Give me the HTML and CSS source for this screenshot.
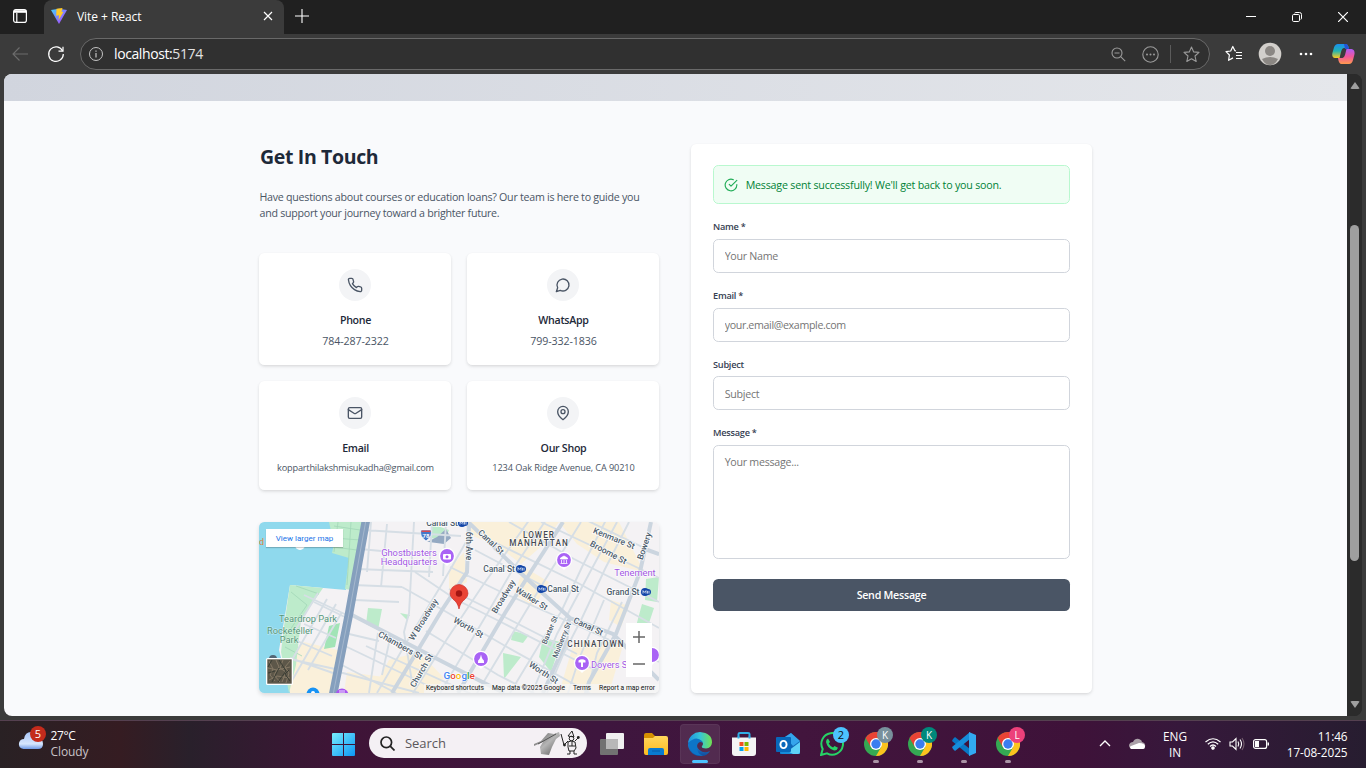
FILE: index.html
```html
<!DOCTYPE html>
<html lang="en">
<head>
<meta charset="utf-8">
<title>Vite + React</title>
<link rel="stylesheet" href="styles.css">
</head>
<body>
<svg class="defs" width="0" height="0">
  <defs>
    <linearGradient id="vite" x1="0" y1="0" x2="1" y2="1"><stop offset="0" stop-color="#41d1ff"/><stop offset="1" stop-color="#bd34fe"/></linearGradient>
    <linearGradient id="win" x1="0" y1="0" x2="1" y2="1"><stop offset="0" stop-color="#78eefe"/><stop offset="1" stop-color="#0c96f4"/></linearGradient>
    <linearGradient id="edgeA" x1="0" y1="0" x2="1" y2="0"><stop offset="0" stop-color="#1d91df"/><stop offset=".5" stop-color="#36c5d8"/><stop offset="1" stop-color="#71e250"/></linearGradient>
    <linearGradient id="edgeB" x1="0" y1="0" x2="0" y2="1"><stop offset="0" stop-color="#1a8fe0"/><stop offset="1" stop-color="#114b9c"/></linearGradient>
    <linearGradient id="copA" x1="0" y1="0" x2="0" y2="1"><stop offset="0" stop-color="#1a8ff0"/><stop offset=".5" stop-color="#22b3b0"/><stop offset="1" stop-color="#ffcb1f"/></linearGradient>
    <linearGradient id="copB" x1="0" y1="0" x2="0" y2="1"><stop offset="0" stop-color="#b05cf6"/><stop offset=".5" stop-color="#f0569b"/><stop offset="1" stop-color="#ff9a4d"/></linearGradient>
    <linearGradient id="cloud" x1="0" y1="0" x2="0" y2="1"><stop offset="0" stop-color="#a9c5f7"/><stop offset=".7" stop-color="#d6e6fc"/><stop offset="1" stop-color="#6f9ae6"/></linearGradient>
    <linearGradient id="hand" x1="0" y1="0" x2="1" y2="1"><stop offset="0" stop-color="#555"/><stop offset=".5" stop-color="#b5b5b5"/><stop offset="1" stop-color="#555"/></linearGradient>
    <linearGradient id="folder" x1="0" y1="0" x2="0" y2="1"><stop offset="0" stop-color="#ffd65c"/><stop offset="1" stop-color="#fdbb20"/></linearGradient>
    <symbol id="chrome" viewBox="0 0 24 24">
      <circle cx="12" cy="12" r="12" fill="#35a853"/>
      <path d="M12 12 1.6 6A12 12 0 0 1 22.4 6Z" fill="#e94335"/>
      <path d="M12 6H22.4A12 12 0 0 1 12 24L17.2 15Z" fill="#fcc31e"/>
      <path d="M1.6 6 6.8 15 12 12V6Z" fill="#e94335"/>
      <circle cx="12" cy="12" r="6" fill="#fff"/><circle cx="12" cy="12" r="4.7" fill="#3a7df0"/>
    </symbol>
    <symbol id="metro" viewBox="0 0 10 8"><circle cx="4" cy="4" r="4" fill="#1245a8"/><circle cx="7" cy="4" r="3" fill="#1245a8"/><path d="M2 5.6V2.6L3.5 4.4 5 2.6V5.6M6.5 2.8v2.8M8 2.8v2.8" stroke="#fff" stroke-width=".7" fill="none"/></symbol>
    <symbol id="place" viewBox="0 0 18 20"><path d="M9 19 5 15H13Z" fill="#fff"/><circle cx="9" cy="9" r="8.2" fill="#fff"/><circle cx="9" cy="9" r="6.9" fill="#a963f5"/></symbol>
  </defs>
</svg>

<div class="window">
  <header class="tabbar">
    <div class="workspaces"><svg width="16" height="16" viewBox="0 0 16 16" fill="none" stroke="#fff" stroke-width="1.2"><rect x="1.6" y="1.6" width="12.8" height="12.8" rx="2.2"/><path d="M2 3.500h12" stroke-width="2.600"/><path d="M4.800 5v9"/></svg></div>
    <div class="tab">
      <svg width="16" height="16" viewBox="0 0 16 16"><path d="M0 2 8 .8 16 2 8 16Z" fill="url(#vite)"/><path d="M5.500 .8 11.5 0 10.500 4 12.500 3.800 7.5 12.200 8 7.200 5.200 7.700Z" fill="#ffc928"/></svg>
      <span class="tab-title">Vite + React</span>
      <svg class="tab-close" width="10" height="10" viewBox="0 0 10 10"><path d="M1 1l8 8M9 1l-8 8" stroke="#fff" stroke-width="1.2"/></svg>
    </div>
    <svg class="newtab" width="14" height="14" viewBox="0 0 14 14"><path d="M7 0v14M0 7h14" stroke="#fff" stroke-width="1.1"/></svg>
    <div class="controls">
      <svg width="10" height="10" viewBox="0 0 10 10"><path d="M0 4.5h10" stroke="#fff"/></svg>
      <svg width="10" height="10" viewBox="0 0 10 10" fill="none" stroke="#fff"><rect x=".5" y="2.5" width="7" height="7" rx="1.2"/><path d="M2.5 1.2Q3 .5 4 .5H7.5Q9.5.5 9.5 2.5V6Q9.5 7 8.8 7.5"/></svg>
      <svg width="10" height="10" viewBox="0 0 10 10"><path d="M0 0l10 10M10 0L0 10" stroke="#fff" stroke-width="1.2"/></svg>
    </div>
  </header>
  <div class="toolbar">
    <svg class="back" width="16" height="16" viewBox="0 0 16 16" fill="none" stroke="#6d6d6d" stroke-width="1.1"><path d="M7.5 1.5 1 8l6.500 6.500M1 8h15"/></svg>
    <svg class="reload" width="18" height="18" viewBox="0 0 18 18" fill="none" stroke="#fff" stroke-width="1.2"><path d="M15.600 6A7.300 7.300 0 1 0 16.300 9"/><path d="M16 1.800V6.200H11.500"/></svg>
    <div class="address">
      <svg class="info" width="14" height="14" viewBox="0 0 14 14" fill="none" stroke="#c4c4c4"><circle cx="7" cy="7" r="6.500"/><path d="M7 6v4.500M7 3.500v1.300" stroke-width="1.200"/></svg>
      <span class="url"><b>localhost:</b>5174</span>
      <div class="address-icons">
        <svg width="15" height="15" viewBox="0 0 15 15" fill="none" stroke="#9a9a9a" stroke-width="1.100"><circle cx="6" cy="6" r="5"/><path d="M3.500 6h5M9.700 9.700l4.500 4.500"/></svg>
        <svg width="17" height="17" viewBox="0 0 17 17" fill="none" stroke="#9a9a9a" stroke-width="1.100"><circle cx="8.500" cy="8.500" r="7.700"/><g fill="#9a9a9a" stroke="none"><circle cx="5" cy="8.500" r="1"/><circle cx="8.500" cy="8.500" r="1"/><circle cx="12" cy="8.500" r="1"/></g></svg>
        <i class="divider"></i>
        <svg width="17" height="17" viewBox="0 0 17 17" fill="none" stroke="#9a9a9a" stroke-width="1.100" stroke-linejoin="round"><path d="M8.500 1 10.700 5.900 16 6.400 12 10 13.200 15.500 8.500 12.700 3.800 15.500 5 10 1 6.400 6.300 5.900Z"/></svg>
      </div>
    </div>
    <svg class="fav" width="18" height="18" viewBox="0 0 18 18" fill="none" stroke="#fff" stroke-width="1.200" stroke-linejoin="round"><path d="M11 6 9.900 5.700 7.800 1.500 5.700 6 1 6.600 4.400 10 3.600 15.300 8 12.900M11 7.500H17M11 10.500H17M11 13.500H17"/></svg>
    <svg class="avatar" width="24" height="24" viewBox="0 0 24 24"><circle cx="12" cy="12" r="11.300" fill="#d2cfcb"/><circle cx="12" cy="9" r="5" fill="#8b8783"/><path d="M4 17Q12 12.800 20 17 17 23 12 23T4 17Z" fill="#8b8783"/></svg>
    <svg class="more" width="14" height="4" viewBox="0 0 14 4" fill="#fff"><circle cx="2" cy="2" r="1.300"/><circle cx="7" cy="2" r="1.300"/><circle cx="12" cy="2" r="1.300"/></svg>
    <svg class="copilot" width="23" height="22" viewBox="0 0 23 22"><path d="M6 1H13.500Q16 1 16.800 5H12Q10 5 9 9L7.500 15H3Q-.500 14.500.400 10L2 4.500Q3 1 6 1Z" fill="url(#copA)"/><path d="M12 1h2Q16 1 17 6H13Z" fill="#2454d6"/><path d="M17 21H9.500Q6.800 21 6 15H10.500Q12 15 13 12L14.500 6H19.500Q23.500 7 22.300 12L21 17Q20 21 17 21Z" fill="url(#copB)"/></svg>
  </div>

  <div class="viewport">
    <main class="page">
      <div class="hero-edge"></div>
      <div class="contact">
        <section class="left">
          <h1>Get In Touch</h1>
          <p class="intro">Have questions about courses or education loans? Our team is here to guide you<br>and support your journey toward a brighter future.</p>
          <div class="cards">
            <article class="card">
              <span class="bubble"><svg class="lucide" viewBox="0 0 24 24"><path d="M22 16.920v3a2 2 0 0 1-2.180 2 19.790 19.790 0 0 1-8.630-3.070 19.500 19.500 0 0 1-6-6 19.790 19.790 0 0 1-3.070-8.670A2 2 0 0 1 4.110 2h3a2 2 0 0 1 2 1.720 12.840 12.840 0 0 0 .7 2.810 2 2 0 0 1-.45 2.110L8.090 9.910a16 16 0 0 0 6 6l1.270-1.270a2 2 0 0 1 2.110-.45 12.840 12.840 0 0 0 2.810.7A2 2 0 0 1 22 16.920z"/></svg></span>
              <h3>Phone</h3><p>784-287-2322</p>
            </article>
            <article class="card">
              <span class="bubble"><svg class="lucide" viewBox="0 0 24 24"><path d="M7.900 20A9 9 0 1 0 4 16.100L2 22Z"/></svg></span>
              <h3>WhatsApp</h3><p>799-332-1836</p>
            </article>
            <article class="card">
              <span class="bubble"><svg class="lucide" viewBox="0 0 24 24"><rect x="2" y="4" width="20" height="16" rx="2"/><path d="m22 7-8.970 5.700a1.940 1.940 0 0 1-2.060 0L2 7"/></svg></span>
              <h3>Email</h3><p class="small">kopparthilakshmisukadha@gmail.com</p>
            </article>
            <article class="card">
              <span class="bubble"><svg class="lucide" viewBox="0 0 24 24"><path d="M20 10c0 6-8 12-8 12s-8-6-8-12a8 8 0 0 1 16 0Z"/><circle cx="12" cy="10" r="3"/></svg></span>
              <h3>Our Shop</h3><p class="small street">1234 Oak Ridge Avenue, CA 90210</p>
            </article>
          </div>
          <div class="map">
            <svg class="map-canvas" width="400" height="171" viewBox="0 0 400 171">
              <rect width="400" height="171" fill="#f4f2f4"/>
              <g fill="#faf0da">
                <path d="M205 0H300L285 22 262 42 240 25 214 14ZM300 0H360L385 50 345 40 318 22ZM265 45 290 60 275 85 255 72ZM25 135 45 120 87 130 77 171H26ZM130 138 160 130 185 156 175 171H112ZM315 120 365 120 350 171H300ZM190 48 205 30 208 60 190 70ZM352 78 370 84 362 105 350 98ZM88 150 125 155 125 171H85Z"/>
              </g>
              <path d="M0 0H81L79 22 90 35 87 68 31 63 24 105 20 128 31 171H0Z" fill="#8fd9ed"/>
              <g fill="#bdebcb">
                <path d="M70 0H103L99 35 92 68 86 67 90 36 73 31 75 22Z"/><path d="M31 63 64 66 42 98 37 143 30 171 22 130 25 104Z"/><path d="M109 86 123 87 119 108 107 102ZM173 2 190 8 186 18 170 16ZM141 91 151 93 148 98ZM254 109 270 113 264 121 252 118ZM244 131 262 135 245 157ZM284 116 302 120 292 150 280 135ZM387 57 400 55 398 80 386 78ZM383 82 395 86 386 113 376 108Z"/>
              </g>
              <path d="M70 104 81 101 76 125 65 127Z" fill="#a2e4b7"/>
              <g fill="none" stroke="#a2d7b7" stroke-width=".8"><path d="M79 0 75 30M92 0 88 63M75 16 101 18M32 70 48 83 24 118M26 125 43 134M37 64 60 72M75 4 101 8M74 25 98 28"/></g>
              <path d="m168 20 10-5 9-8 5 9-7 6-15-2Z" fill="#94a9c2"/>
              <g fill="none" stroke="#d6dee5" stroke-width="1.900">
                <path d="M104 8 202 14M101 27 154 32M98 47 174 50M94 63 143 65M112 0 108 50M128 2 122 65M155 0 150 91 145 110 153 160M173 0 170 55M187 0 184 54"/>
                <path d="M59 71 37 107M68 77 30 143M77 82 31 162M83 90 49 148M55 80 92 98M45 102 77 116M38 119 73 134M35 138 76 147M80 150 160 171M45 73 90 94M31 136 74 151"/>
                <path d="M86 124 180 169M81 142 137 171M107 124 230 180M119 111 110 171M132 112 123 153M90 112 120 119M96 78 140 80"/>
                <path d="M143 65 184 88 248 125 331 171M156 50 196 77 240 99 338 149M190 67 230 87 318 132M167 109 239 153 280 174M191 45 240 69 299 95 400 140M216 28 286 65M235 20 319 61 400 106M250 0 315 37 400 80M282 0 350 32 400 56M325 -3 400 33"/>
                <path d="M118 171 150 116 183 62 207 20M154 171 188 117 222 66 271 -3M181 171 228 92 254 47 287 -2M218 171 267 89 286 58 322 0M251 171 283 118 302 90 323 45 347 -2M273 171 298 112 330 52 358 0M288 171 304 133 323 96 346 47 370 0M309 171 320 137 345 78M328 171 338 131 363 80M211 0 208 55"/>
              </g>
              <g fill="none" stroke="#cbd5df" stroke-width="4"><path d="M205 -4 268 57 311 96 354 112 400 158M392 0 381 50 357 112 330 160 326 175M210 0 208 50 183 88 133 171M310 97 307 120 284 171M383 26 400 32M93 93 190 143 245 171M199 171 246 91 273 48 304 0"/></g>
              <path d="M107 -2 90 92 74 173" stroke="#859fbd" stroke-width="8.500" fill="none"/><path d="M107 -2 90 92 74 173" stroke="#a4b7cd" stroke-width="1" fill="none"/>
              <g class="road"><text transform="translate(183 4)">Canal St</text><text transform="translate(207 24) rotate(90)">6th Ave</text><text transform="translate(230 22) rotate(43)">Canal St</text><text transform="translate(354 19) rotate(22)">Kenmare St</text><text transform="translate(348 33) rotate(28)">Broome St</text><text transform="translate(388 25) rotate(-71)">Bowery</text><text transform="translate(240 50)">Canal St</text><text transform="translate(304 70)">Canal St</text><text transform="translate(364 73)">Grand St</text><text transform="translate(247 76) rotate(-59)">Broadway</text><text transform="translate(271 79) rotate(32)">Walker St</text><text transform="translate(328 107) rotate(25)">Canal St</text><text class="tiny" transform="translate(293 109) rotate(-67)">Baxter St</text><text class="tiny" transform="translate(305 119) rotate(-68)">Mulberry St</text><text transform="translate(208 108) rotate(30)">Worth St</text><text transform="translate(283 153) rotate(33)">Worth St</text><text transform="translate(167 99) rotate(-58)">W Broadway</text><text transform="translate(140 126) rotate(29)">Chambers St</text><text transform="translate(165 150) rotate(-60)">Church St</text></g>
              <g class="area"><text x="280" y="15.500">LOWER</text><text x="280" y="24">MANHATTAN</text><text x="337" y="125">CHINATOWN</text></g>
              <g class="poi"><text x="150" y="34">Ghostbusters</text><text x="150" y="43">Headquarters</text><text x="376" y="54">Tenement</text><text x="332" y="146" class="start">Doyers S</text></g>
              <g class="park"><text x="49" y="100">Teardrop Park</text><text x="31" y="112">Rockefeller</text><text x="30" y="121">Park</text></g>
              <text x="0" y="23" class="orange">d</text>
              <use href="#metro" x="199" y="-3" width="10" height="8"/><use href="#metro" x="257" y="43" width="10" height="8"/><use href="#metro" x="278" y="63" width="10" height="8"/><use href="#metro" x="382" y="66" width="10" height="8"/>
              <g><path d="M162 8H172Q174 14 167 19 160 14 162 8Z" fill="#4578c9" stroke="#fff" stroke-width=".7"/><path d="M162.500 8.500H171.500V10H162.500Z" fill="#d94950"/><text x="167" y="16" class="shield">78</text></g>
              <use href="#place" x="179" y="25" width="18" height="20"/><rect x="184" y="32" width="8" height="5.500" rx="1" fill="#fff"/><circle cx="188" cy="34.800" r="1.500" fill="#a855f0"/>
              <use href="#place" x="296" y="29" width="18" height="20"/><path d="m301.500 36 3.500-2 3.500 2v1h-7zM302.500 38v3M305 38v3M307.500 38v3M301.500 41.500h7" stroke="#fff" fill="#fff" stroke-width=".8"/>
              <use href="#place" x="213" y="128" width="18" height="20"/><path d="m222 132.500.800 3 .700 1.500q2 1 1.500 4h-6q-.500-3 1.500-4l.700-1.500Z" fill="#fff"/>
              <use href="#place" x="314" y="132" width="18" height="20"/><path d="M319.500 138.500q3.500-2.500 7 0v2h-2.500v4.500h-2v-4.500h-2.500Z" fill="#fff"/>
              <use href="#place" x="384" y="124" width="18" height="20"/>
              <circle cx="54" cy="172" r="6.500" fill="#1692f5"/><circle cx="54" cy="171" r="2" fill="#fff"/><circle cx="83" cy="173" r="6.500" fill="#a855f0"/><path d="M81 171v-3M83 171v-3M85 171v-3" stroke="#fff" stroke-width=".8"/>
              <circle cx="14" cy="137" r="4" fill="#536675"/><circle cx="41" cy="23" r="5" fill="#fff"/>
              <path d="M200 87Q198.500 80 194 77.200 191 74.500 191 71.500A9 9 0 0 1 209 71.500Q209 74.500 206 77.200 201.500 80 200 87Z" fill="#ea4335" stroke="#c5221f" stroke-width=".6"/><circle cx="200" cy="71.500" r="3.200" fill="#a31512"/>
              <text x="184.500" y="156.500" class="google"><tspan fill="#4285f4">G</tspan><tspan fill="#ea4335">o</tspan><tspan fill="#fbbc04">o</tspan><tspan fill="#4285f4">g</tspan><tspan fill="#34a853">l</tspan><tspan fill="#ea4335">e</tspan></text>
              <rect x="165" y="162" width="235" height="9" fill="#f5f5f5" opacity=".75"/>
              <g class="legal"><text x="167" y="168.300" textLength="58">Keyboard shortcuts</text><text x="233" y="168.300" textLength="73">Map data ©2025 Google</text><text x="314" y="168.300" textLength="18">Terms</text><text x="340" y="168.300" textLength="56">Report a map error</text></g>
              <g><rect x="7" y="136" width="27" height="27" rx="1.500" fill="#fff"/><rect x="8.300" y="137.300" width="24.400" height="24.400" fill="#5d5749"/><path d="m10 139 4 8-3 6 5 6M17 138l3 7-5 8 6 7M24 138l-3 8 6 4-4 10M31 139l-5 6 4 6-3 10M9 146l9 2 13-3M10 158l8-4 13 2" fill="none" stroke="#8a7d69" stroke-width=".9"/><path d="m13 138-4 7M20 138l7 11-8 11M9 151l7-2M30 148l-4 4 5 7M13 160l7-14" fill="none" stroke="#3b3e35" stroke-width="1"/></g>
            </svg>
            <span class="larger">View larger map</span>
            <div class="zoom"><svg width="12" height="12" viewBox="0 0 12 12"><path d="M6 0v12M0 6h12" stroke="#666" stroke-width="1.500"/></svg><svg width="12" height="12" viewBox="0 0 12 12"><path d="M0 6h12" stroke="#666" stroke-width="1.500"/></svg></div>
          </div>
        </section>
        <section class="form-card">
          <div class="alert"><svg class="check" viewBox="0 0 24 24"><path d="M22 11.080V12a10 10 0 1 1-5.930-9.140"/><path d="m9 11 3 3L22 4"/></svg><span>Message sent successfully! We'll get back to you soon.</span></div>
          <div class="field"><label>Name *</label><input class="input" placeholder="Your Name"></div>
          <div class="field"><label>Email *</label><input class="input mail" placeholder="your.email@example.com"></div>
          <div class="field"><label>Subject</label><input class="input" placeholder="Subject"></div>
          <div class="field"><label>Message *</label><textarea class="input message" placeholder="Your message..."></textarea></div>
          <button class="send">Send Message</button>
        </section>
      </div>
    </main>
    <div class="scrollbar"><i class="arrow up"></i><i class="thumb"></i><i class="arrow down"></i></div>
  </div>
</div>

<footer class="taskbar">
  <div class="weather">
    <svg width="28" height="28" viewBox="0 0 28 28"><path d="M5.500 24Q0 23 1 18 2 14 6 14 7 7 13 7 18 7 19 13 25 13 25 19 25 24 20 24Z" fill="url(#cloud)"/></svg>
    <span class="badge red">5</span>
    <div class="weather-text"><span>27°C</span><span class="dim">Cloudy</span></div>
  </div>
  <div class="apps">
    <div class="app start-menu"><svg width="23" height="23" viewBox="0 0 23 23" fill="url(#win)"><path d="M0 1Q0 0 1 0H11V11H0ZM12 0H22Q23 0 23 1V11H12ZM0 12H11V23H1Q0 23 0 22ZM12 12H23V22Q23 23 22 23H12Z"/></svg></div>
    <div class="search">
      <svg width="15" height="15" viewBox="0 0 15 15" fill="none" stroke="#222" stroke-width="1.700"><circle cx="6.300" cy="6.300" r="5.300"/><path d="m10.200 10.200 4.300 4.300"/></svg>
      <span>Search</span>
      <svg class="doodle" width="46" height="26" viewBox="0 0 46 26"><path d="M0 14 7 11 14 3 20 4 25 2 26 6 22 9 18 17 15 25 7 24 6 17 9 12 0 16Z" fill="url(#hand)"/><path d="m4 14 18-10" stroke="#555"/><g fill="none" stroke="#222" stroke-width="1"><path d="m34 6 4-5 2 6ZM34 12l3-1 4 1 1 6-2 3H35l-1-4ZM27 4l3 11 4-4M41 11l3-3M36 21v3h-3M40 21v3h3M35 16h6M38 12v4"/><circle cx="37.500" cy="8.500" r="2.300"/></g><circle cx="30.500" cy="15" r="1.400" fill="#222"/><circle cx="44.300" cy="7.500" r="1.400" fill="#222"/></svg>
    </div>
    <div class="app"><svg width="24" height="22" viewBox="0 0 24 22"><rect x="6" width="18" height="16" rx="1" fill="#f0f0f0"/><rect y="6" width="18" height="16" rx="1" fill="#727272"/><path d="M6 6h12v10H6Z" fill="#b8b8b8"/></svg></div>
    <div class="app"><svg width="24" height="22" viewBox="0 0 24 22"><path d="M0 2Q0 0 2 0H8L11 3H22V10H0Z" fill="#d69000"/><path d="M0 5H9L11 3H22Q24 3 24 5V20Q24 22 22 22H2Q0 22 0 20Z" fill="url(#folder)"/><path d="M4 22V17Q4 15 6 15H18Q20 15 20 17V22Z" fill="#087bd1"/><path d="M8 18h8" stroke="#075ca8"/></svg></div>
    <div class="app active"><svg width="24" height="24" viewBox="0 0 24 24"><path d="M0 12A12 12 0 0 0 14 24Q19 24 22 19 16 22 11.500 18T10 10Z" fill="url(#edgeB)"/><path d="M0 12Q1 5 8 5 15 5 15 12 15 10 12 10 9 11 9 15 9 22 15 23.500 3 25 0 12Z" fill="#0d75c8"/><path d="M0 11A12 12 0 0 1 12 0Q24 1 24 10.500 23.500 16 18 16.500 13 16 14 14 16 12 14 9 8 3 0 11Z" fill="url(#edgeA)"/></svg><i class="run on"></i></div>
    <div class="app"><svg width="24" height="24" viewBox="0 0 24 24"><path d="M6.500 7V2Q6.500 1 8 1H16Q17.500 1 17.500 2V7" fill="none" stroke="#31aee5" stroke-width="2"/><path d="M0 5.500H24V21Q24 24 21 24H3Q0 24 0 21Z" fill="#f4f4f4"/><path d="M5.500 5.500h2M16.500 5.500h2" stroke="#31aee5" stroke-width="2"/><path d="M7.500 10h4v4h-4Z" fill="#f25022"/><path d="M12.500 10h4v4h-4Z" fill="#7fba00"/><path d="M7.500 15h4v4h-4Z" fill="#00a4ef"/><path d="M12.500 15h4v4h-4Z" fill="#ffb900"/></svg></div>
    <div class="app"><svg width="24" height="24" viewBox="0 0 24 24"><path d="M4 8 15 1 24 9V22H4Z" fill="#1066b5"/><path d="m9 5 6-4 9 8-7 5Z" fill="#35a5ec"/><path d="m8 22 16-12V20Q24 22 22 22Z" fill="#5ed2f7"/><path d="M4 15 17 22H6Q4 22 4 20Z" fill="#168cdb"/><rect y="5" width="15" height="15" rx="1" fill="#0868bb"/><ellipse cx="7.500" cy="12.500" rx="3.100" ry="3.600" fill="none" stroke="#fff" stroke-width="1.900"/></svg></div>
    <div class="app"><svg width="24" height="24" viewBox="0 0 24 24"><path d="M1 23 2.700 17A10.800 10.800 0 1 1 7 21.300Z" fill="none" stroke="#26d366" stroke-width="2"/><path d="M8 6.500 10 10 8.700 11.500Q10 14 13 15.500L14.500 14 18 15.700Q17 19 13.500 18.300 7.500 16.500 6 10 6 7 8 6.500Z" fill="#26d366"/></svg><span class="badge blue">2</span></div>
    <div class="app"><svg width="24" height="24"><use href="#chrome" width="24" height="24"/></svg><span class="badge gray">K</span><i class="run"></i></div>
    <div class="app"><svg width="24" height="24"><use href="#chrome" width="24" height="24"/></svg><span class="badge teal">K</span><i class="run"></i></div>
    <div class="app"><svg width="24" height="24" viewBox="0 0 24 24"><path d="m1 7 2-2L18 17V24L0 9Z" fill="#0877c5"/><path d="m1 17 2 2L18 7V0L0 15Z" fill="#168ddb"/><path d="m17 0 7 3V21L17 24Z" fill="#32a9f1"/></svg><i class="run"></i></div>
    <div class="app"><svg width="24" height="24"><use href="#chrome" width="24" height="24"/></svg><span class="badge pink">L</span><i class="run"></i></div>
  </div>
  <div class="tray">
    <svg width="12" height="7" viewBox="0 0 12 7"><path d="m1 6 5-5 5 5" fill="none" stroke="#fff" stroke-width="1.400"/></svg>
    <svg class="onedrive" width="17" height="12" viewBox="0 0 17 12"><path d="M3 11Q0 10 0 7 1 4 4 4 6 0 10 1 13 2 13 4 17 5 16 9L14 11Z" fill="#aaa0a8"/><path d="M2 11Q0 9 2 8L10 5Q16 5 16 8.500 16 11 14 11Z" fill="#fff"/></svg>
    <div class="lang"><span>ENG</span><span>IN</span></div>
    <svg class="wifi" width="16" height="12" viewBox="0 0 16 12" fill="none" stroke="#fff" stroke-width="1.200"><path d="M.500 4Q8-2.500 15.500 4M2.800 6.300Q8 1.500 13.200 6.300M5 8.500Q8 5.500 11 8.500"/><circle cx="8" cy="10" r="1.200" fill="#fff"/></svg>
    <svg class="sound" width="16" height="14" viewBox="0 0 16 14" fill="none" stroke="#fff" stroke-width="1.100"><path d="M1 5H3.500L7 1.500V12.500L3.500 9H1ZM9 4.500Q10.500 7 9 9.500M11 2.500Q14 7 11 11.500"/><path d="M13 1Q17 7 13 13" stroke="#75616f"/></svg>
    <svg class="battery" width="16" height="10" viewBox="0 0 16 10"><rect x=".600" y=".600" width="13" height="8.800" rx="2" fill="none" stroke="#fff" stroke-width="1.200"/><path d="M2 2h4v6H2ZM14.500 3.500H16v3H14.500Z" fill="#fff"/></svg>
    <div class="clock"><span>11:46</span><span>17-08-2025</span></div>
  </div>
</footer>
</body>
</html>
```
FILE: styles.css
```css
* { box-sizing: border-box; }
body { margin: 0; width: 1366px; height: 768px; overflow: hidden; display: flex; flex-direction: column; font-family: "Open Sans", "Noto Sans", sans-serif; background: #3b3b3b; }
svg { display: block; flex: none; }
.defs { position: absolute; }
h1, h3, p { margin: 0; }

.window { height: 720px; display: flex; flex-direction: column; background: #3b3b3b; color: #fff; }
.tabbar { height: 34px; display: flex; align-items: center; background: #202020; }
.workspaces { width: 44px; height: 34px; padding: 8px 0 0 12px; }
.tab { width: 240px; height: 34px; display: flex; align-items: center; padding: 0 11px 2px 7px; background: #3b3b3b; border-radius: 8px 8px 0 0; }
.tab-title { margin-left: 10px; font-size: 12px; letter-spacing: -.05px; }
.tab-close { margin-left: auto; }
.newtab { margin: -3px 0 0 11px; }
.controls { margin-left: auto; display: flex; gap: 36px; padding-right: 18px; }
.toolbar { height: 40px; display: flex; align-items: center; padding-left: 12px; }
.reload { margin-left: 19px; }
.address { width: 1130px; height: 32px; margin-left: 15px; border: 1px solid #696969; border-radius: 16px; background: #303030; display: flex; align-items: center; padding: 0 9px 0 8px; }
.url { margin: -1px 0 0 11px; font-size: 14px; letter-spacing: -.4px; color: #e2e2e2; }
.url b { font-weight: 400; color: #fff; }
.address-icons { margin-left: auto; display: flex; align-items: center; }
.address-icons svg:nth-child(2) { margin-left: 16px; }
.divider { width: 1px; height: 18px; background: #5b5b5b; margin: 0 12px 0 11px; }
.fav { margin-left: 15px; }
.avatar { margin-left: 15px; }
.more { margin-left: 17px; }
.copilot { margin-left: 19px; }

.viewport { height: 642px; margin: 0 4px; display: flex; border-radius: 8px; overflow: hidden; background: #2b2b2b; }
.page { width: 1343px; background: #f9fafb; background: #f9fafc; }
.hero-edge { height: 27px; background: linear-gradient(90deg, #d1d5de, #e5e7eb); }
.contact { width: 833px; margin: 43px 0 0 255px; display: grid; grid-template-columns: 400px 401px; gap: 32px; color: #1e2939; }
.left { height: 549px; display: flex; flex-direction: column; }
h1 { padding-left: 1px; font-size: 19.500px; line-height: 26px; font-weight: 700; letter-spacing: -.35px; }
.intro { height: 32px; margin: 19px 0 32px; padding-left: .5px; font-size: 10.670px; line-height: 16px; letter-spacing: -.26px; color: #4a5565; white-space: nowrap; }
.cards { display: grid; grid-template-columns: 192px 192px; grid-template-rows: 112px 109px; gap: 16px; }
.card { background: #fff; border-radius: 5.300px; padding: 16px 0 0 1px; display: flex; flex-direction: column; align-items: center; box-shadow: 0 2px 4px -1px #0000001a, 0 1px 3px #00000012; }
.bubble { width: 32px; height: 32px; margin-left: -1px; border-radius: 50%; background: #f3f4f6; display: grid; place-items: center; }
.lucide { width: 16px; height: 16px; fill: none; stroke: #4a5565; stroke-width: 2; stroke-linecap: round; stroke-linejoin: round; }
.card h3 { margin-top: 11px; font-size: 10.670px; line-height: 16px; font-weight: 600; letter-spacing: -.3px; }
.card p { margin-top: 5px; font-size: 10.670px; line-height: 16px; letter-spacing: -.12px; color: #4a5565; }
.card p.small { font-size: 9.200px; letter-spacing: -.2px; line-height: 14px; margin-top: 5px; white-space: nowrap; }
.card p.street { letter-spacing: -.12px; }

.map { position: relative; height: 171px; margin-top: 32px; border-radius: 5.300px; overflow: hidden; box-shadow: 0 2px 4px #0002; font-family: Roboto, sans-serif; }
.map text { font-family: Roboto, sans-serif; }
.road text { font-size: 8.500px; fill: #4d5d6c; text-anchor: middle; stroke: #ffffffd9; stroke-width: 1.700px; paint-order: stroke; font-weight: 500; }
.road .tiny { font-size: 7.300px; }
.area text { font-size: 8.200px; letter-spacing: 1.050px; font-weight: 500; text-anchor: middle; fill: #454950; stroke: #fff; stroke-width: 1px; paint-order: stroke; }
.poi text { font-size: 9.300px; text-anchor: middle; fill: #a156e2; stroke: #fff; stroke-width: 1.200px; paint-order: stroke; }
.poi text.start { text-anchor: start; }
.park text { font-size: 9.300px; text-anchor: middle; fill: #559678; stroke: #ffffff80; stroke-width: 1px; paint-order: stroke; }
.orange { font-size: 9px; fill: #dc843d; }
.shield { font-size: 6px; fill: #fff; text-anchor: middle; font-weight: 700; }
.google { font-size: 9.900px; font-weight: 500; stroke: #fff; stroke-width: 1px; paint-order: stroke; }
.legal text { font-size: 6.700px; fill: #111; }
.larger { position: absolute; left: 7px; top: 7px; width: 77px; height: 18px; display: grid; place-items: center; background: #fff; color: #1a73e8; font-size: 8px; box-shadow: 0 1px 1px #0003; }
.zoom { position: absolute; right: 7px; top: 101px; width: 26px; height: 54px; display: flex; flex-direction: column; align-items: center; justify-content: space-around; background: #fff; }

.form-card { height: 549px; background: #fff; border-radius: 5.300px; padding: 21.330px 22px; display: flex; flex-direction: column; box-shadow: 0 2px 4px -1px #0000001a, 0 1px 3px #00000012; }
.alert { height: 38.500px; margin-bottom: 16.300px; border: 1px solid #b9f8cf; border-radius: 5.300px; background: #f0fdf4; display: flex; align-items: center; padding-left: 9.700px; gap: 8px; color: #008236; font-size: 10.670px; letter-spacing: -.2px; }
.check { width: 14px; height: 14px; fill: none; stroke: #22ad58; stroke-width: 2; stroke-linecap: round; stroke-linejoin: round; }
.field { display: flex; flex-direction: column; margin-bottom: 16px; }
.field label { height: 13.400px; margin-bottom: 5.300px; font-size: 9.200px; line-height: 13.400px; font-weight: 600; letter-spacing: -.25px; color: #364153; }
.input { height: 34px; border: 1px solid #d1d5dc; border-radius: 5.300px; padding: 1px 10.670px 0; background: #fff; font: 10.670px "Open Sans", sans-serif; letter-spacing: -.27px; outline: 0; resize: none; }
.input.mail { letter-spacing: -.35px; padding-top: 0; }
.input::placeholder { color: #757575; opacity: 1; }
.message { height: 114px; padding-top: 9px; }
.send { height: 32px; margin-top: 4px; border: 0; border-radius: 5.300px; background: #4a5565; color: #fff; font: 600 10.670px "Open Sans", sans-serif; letter-spacing: -.25px; }

.scrollbar { width: 15px; background: #2b2b2b; display: flex; flex-direction: column; align-items: center; padding: 8px 0 8px; }
.arrow { border: 5px solid transparent; border-radius: 2px; }
.up { border-top: 0; border-bottom: 7px solid #9f9f9f; }
.down { border-bottom: 0; border-top: 7px solid #9f9f9f; margin-top: auto; }
.thumb { width: 9px; height: 336px; margin-top: 136px; border-radius: 5px; background: #9f9f9f; }

.taskbar { height: 48px; display: flex; border-top: 1px solid #554050; color: #fff; background: linear-gradient(90deg, #292124 0, #351c22 120px, #29202b 190px, #3f1437 340px, #3e163e 600px, #42153d 800px, #3e1239 1080px, #36183b 1180px, #271d30 1366px); }
.weather { position: relative; width: 322px; display: flex; padding: 4px 0 0 18px; }
.weather-text { display: flex; flex-direction: column; margin-left: 4.500px; font-size: 12px; line-height: 16px; letter-spacing: -.35px; padding-top: 3px; }
.dim { color: #c9c3c7; letter-spacing: -.1px; }
.badge { position: absolute; display: grid; place-items: center; border-radius: 50%; width: 16px; height: 16px; font-size: 10px; line-height: 16px; right: 5px; top: 3px; }
.badge.red { left: 30px; top: 5px; background: #c42b1c; font-size: 11px; }
.apps { display: flex; align-items: center; padding-bottom: 1px; }
.app { position: relative; z-index: 0; width: 44px; height: 40px; display: grid; place-items: center; }
.start-menu { padding-right: 1px; }
.search { width: 218px; height: 30px; margin: -2px 3px 0 3px; border-radius: 15px; background: #f4f0f4; display: flex; align-items: center; padding: 0 7px 0 11px; color: #5b575b; font-size: 13px; }
.search span { margin-left: 10px; letter-spacing: -.05px; }
.doodle { margin-left: auto; }
.active::before { content: ""; position: absolute; z-index: -1; inset: 0 2px; border-radius: 4px; background: #ffffff18; border: 1px solid #ffffff0d; }
.run { position: absolute; bottom: 1px; width: 6px; height: 3px; border-radius: 2px; background: #aa94a6; }
.run.on { width: 16px; background: #4cc2ff; }
.blue { background: #4cc2ff; color: #111; font-size: 11px; }
.gray { background: #78909c; }
.teal { background: #00897b; }
.pink { background: #ec407a; }
.tray { margin-left: auto; display: flex; align-items: center; padding: 0 18.500px 2px 0; font-size: 11.800px; line-height: 16px; letter-spacing: -.08px; }
.onedrive { margin-left: 18px; }
.lang { width: 26px; margin-left: 16.500px; display: flex; flex-direction: column; align-items: center; }
.wifi { margin-left: 16.500px; }
.sound { margin-left: 8px; }
.battery { margin-left: 8px; }
.clock { width: 79px; display: flex; flex-direction: column; align-items: flex-end; }
```
